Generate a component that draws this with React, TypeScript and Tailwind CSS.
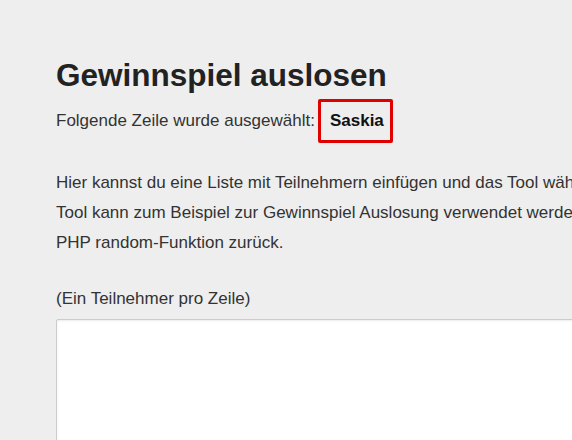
export default function App() {
  return (
    <div className="h-[440px] w-[572px] overflow-hidden bg-[#eeeeee] text-[#333333] font-['Liberation_Sans',Arial,sans-serif]">
      <div className="w-[900px] pl-[56px] pt-[57px]">
        <h1 className="text-[31.5px] leading-[36px] font-bold text-[#222222]">Gewinnspiel auslosen</h1>

        <div className="mt-[6px] flex items-baseline text-[17px] leading-[22px]">
          <span>Folgende Zeile wurde ausgewählt:</span>
          <span className="ml-[3px] inline-block rounded-[2px] border-[3px] border-[#e10000] py-[8px] pl-[9px] pr-[6px] font-bold text-[#111111]">
            Saskia
          </span>
        </div>

        <p className="mt-[25px] whitespace-nowrap text-[17px] leading-[30px]">
          Hier kannst du eine Liste mit Teilnehmern einfügen und das Tool wählt eine zufällige Zeile aus. Das
          <br />
          Tool kann zum Beispiel zur Gewinnspiel Auslosung verwendet werden. Das Tool greift dabei auf die
          <br />
          PHP random-Funktion zurück.
        </p>

        <div className="mt-[31px] text-[17px] leading-[20px]">(Ein Teilnehmer pro Zeile)</div>

        <textarea
          className="mt-[10px] h-[220px] w-[760px] resize-none rounded-[2px] border border-[#cccccc] bg-white shadow-[inset_0_1px_2px_rgba(0,0,0,0.08)] outline-none"
          defaultValue=""
        />
      </div>
    </div>
  )
}
